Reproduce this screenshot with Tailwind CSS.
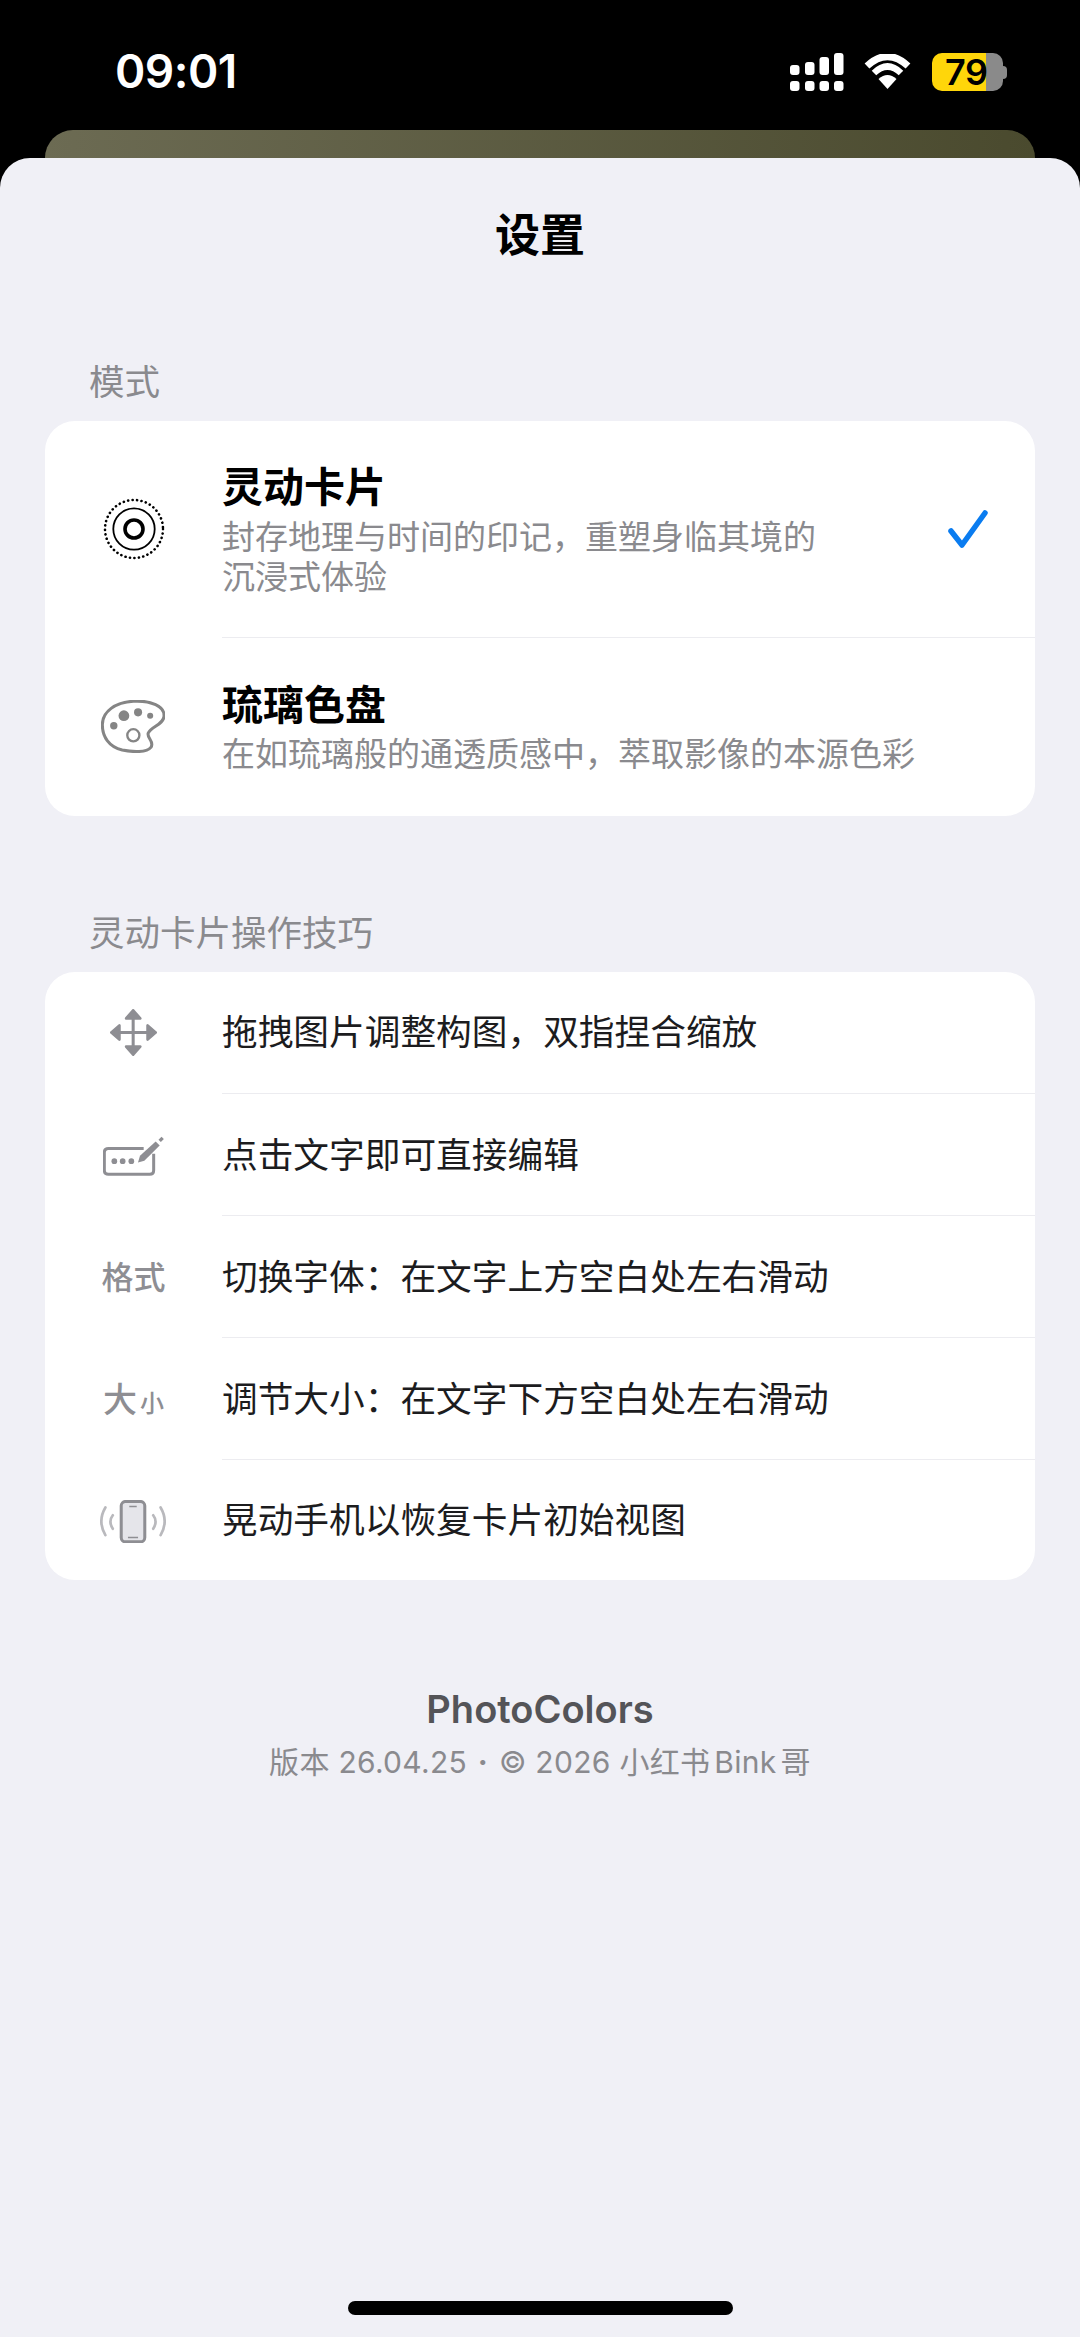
<!DOCTYPE html>
<html lang="zh-CN">
<head>
  <meta charset="UTF-8" />
  <meta name="viewport" content="width=device-width, initial-scale=1.0" />
  <title>设置</title>
  <script src="https://cdn.jsdelivr.net/npm/@tailwindcss/browser@4"></script>
</head>
<body class="bg-black">
<div class="w-[1080px] h-[2337px] bg-black overflow-hidden flex flex-col [font-family:Inter,'Noto_Sans_CJK_SC',sans-serif]">

  <!-- Status bar -->
  <div class="h-[130px] shrink-0 flex items-start justify-between pl-[115px] pr-[73px] text-white">
    <span class="mt-[41px] text-[46px] leading-[60px] font-semibold tracking-[-0.5px]">09:01</span>
    <div class="mt-[53px] flex items-start">
      <svg width="54" height="38" viewBox="790 53 54 38" fill="#fff">
        <rect x="790" y="65" width="9.5" height="10" rx="3"/><rect x="805" y="62" width="9.5" height="13" rx="3"/><rect x="819.5" y="57" width="9.5" height="18" rx="3"/><rect x="834" y="53" width="9.5" height="22" rx="3"/>
        <rect x="790" y="81" width="9.5" height="10" rx="3"/><rect x="805" y="81" width="9.5" height="10" rx="3"/><rect x="819.5" y="81" width="9.5" height="10" rx="3"/><rect x="834" y="81" width="9.5" height="10" rx="3"/>
      </svg>
      <svg class="ml-[20px] mt-[1px]" width="48" height="36" viewBox="864 54 48 36">
        <path d="M867 66 Q887.5 47 908 66" fill="none" stroke="#fff" stroke-width="7"/>
        <path d="M874 73 Q887.5 60 901 73" fill="none" stroke="#fff" stroke-width="6.5"/>
        <path d="M878.5 79 Q887.5 71 896.5 79 L887.5 89 Z" fill="#fff"/>
      </svg>
      <div class="ml-[20px] flex items-center">
        <div class="w-[71px] h-[38px] rounded-[10px] bg-[linear-gradient(90deg,#ffd60a_76%,#8a8a8a_76%)] text-black text-[36px] leading-[38px] font-semibold pl-[13px] tracking-[-0.5px]">79</div>
        <div class="w-[4px] h-[13px] rounded-r-full bg-[#8a8a8a]"></div>
      </div>
    </div>
  </div>

  <!-- Card peeking from behind the sheet -->
  <div class="h-[28px] shrink-0 mx-[45px] rounded-t-[30px] bg-[linear-gradient(90deg,#6c6b53,#4a4a2e)]"></div>

  <!-- Settings sheet -->
  <div class="flex-1 rounded-t-[30px] bg-[#f0f0f6] flex flex-col">
    <h1 class="mt-[50px] text-center text-[45px] leading-[56px] font-bold text-black">设置</h1>

    <p class="mt-[97px] pl-[89px] text-[35.5px] leading-[44px] text-[#8a8a8e]">模式</p>
    <div class="mt-[16px] mx-[45px] bg-white rounded-[30px]">
      <div class="h-[216px] flex items-center">
        <div class="w-[177px] shrink-0 flex justify-center">
          <svg width="62" height="62" viewBox="0 0 62 62" fill="none" stroke="#000">
            <circle cx="31" cy="31" r="29" stroke-width="2.6" stroke-dasharray="0.1 4.4" stroke-linecap="round"/>
            <circle cx="31" cy="31" r="20.7" stroke-width="1.8"/>
            <circle cx="31" cy="31" r="9" stroke-width="3.6"/>
          </svg>
        </div>
        <div class="flex-1 min-w-0">
          <h2 class="text-[41px] leading-[50px] font-bold text-black">灵动卡片</h2>
          <p class="mt-[5px] text-[33px] leading-[40px] text-[#8a8a8e]">封存地理与时间的印记，重塑身临其境的<br>沉浸式体验</p>
        </div>
        <svg class="mr-[47px] shrink-0" width="40" height="38" viewBox="948 510 40 38" fill="none" stroke="#0a7cf0" stroke-width="5.5" stroke-linecap="round" stroke-linejoin="round">
          <path d="M951 531 L962 545 L985 513"/>
        </svg>
      </div>
      <div class="h-[179px] flex items-center relative">
        <div class="absolute top-0 left-[177px] right-0 h-[1px] bg-[#ececf0]"></div>
        <div class="w-[177px] shrink-0 flex justify-center">
          <svg class="-ml-[2px]" width="64" height="53" viewBox="122 782 190 156" fill="none">
            <path d="M218 785 C270 782 312 800 309 830 C307 855 270 860 262 880 C258 895 282 905 270 922 C258 938 215 936 185 930 C145 920 126 890 126 855 C126 815 165 788 218 785 Z" stroke="#858585" stroke-width="9"/>
            <circle cx="190" cy="828" r="16" fill="#858585"/><circle cx="232" cy="818" r="12" fill="#858585"/><circle cx="268" cy="828" r="9" fill="#858585"/><circle cx="160" cy="858" r="11" fill="#858585"/>
            <circle cx="218" cy="886" r="18" stroke="#858585" stroke-width="7"/>
          </svg>
        </div>
        <div class="flex-1 min-w-0">
          <h2 class="text-[41px] leading-[50px] font-bold text-black">琉璃色盘</h2>
          <p class="mt-[4px] text-[33px] leading-[40px] text-[#8a8a8e]">在如琉璃般的通透质感中，萃取影像的本源色彩</p>
        </div>
      </div>
    </div>

    <p class="mt-[96px] pl-[89px] text-[35.5px] leading-[44px] text-[#8a8a8e]">灵动卡片操作技巧</p>
    <div class="mt-[16px] mx-[45px] bg-white rounded-[30px] text-[35.7px] text-[#1c1c1e]">
      <div class="h-[121px] flex items-center">
        <div class="w-[177px] shrink-0 flex justify-center">
          <svg width="47" height="47" viewBox="118 90 140 140" fill="#8e8e93" stroke="#8e8e93" stroke-linejoin="round">
            <path d="M187 160 V110 M187 160 V210 M187 160 H137 M187 160 H238" stroke-width="9"/>
            <path d="M187 94 L208 118 H166 Z M187 226 L208 202 H166 Z M122 160 L146 139 V181 Z M254 160 L230 139 V181 Z" stroke-width="8"/>
          </svg>
        </div>
        <span>拖拽图片调整构图，双指捏合缩放</span>
      </div>
      <div class="h-[122px] pt-[3px] flex items-center relative">
        <div class="absolute top-0 left-[177px] right-0 h-[1px] bg-[#ececf0]"></div>
        <div class="w-[177px] shrink-0 flex justify-center">
          <svg width="62" height="40" viewBox="96 472 186 119" fill="none" stroke="#8e8e93">
            <path d="M218 509 H112 Q100 509 100 521 V574 Q100 586 112 586 H236 Q248 586 248 574 V525" stroke-width="9"/>
            <circle cx="130" cy="547" r="8.5" fill="#8e8e93" stroke="none"/><circle cx="155" cy="547" r="8.5" fill="#8e8e93" stroke="none"/><circle cx="181" cy="547" r="8.5" fill="#8e8e93" stroke="none"/>
            <path d="M201 551 L207 531 L254 488 L266 500 L220 546 Z" fill="#8e8e93" stroke="none"/>
            <path d="M266 486 L275 477" stroke-width="10"/>
          </svg>
        </div>
        <span>点击文字即可直接编辑</span>
      </div>
      <div class="h-[122px] pt-[3px] flex items-center relative">
        <div class="absolute top-0 left-[177px] right-0 h-[1px] bg-[#ececf0]"></div>
        <div class="w-[177px] shrink-0 text-center text-[32px] font-medium text-[#8e8e93]">格式</div>
        <span>切换字体：在文字上方空白处左右滑动</span>
      </div>
      <div class="h-[122px] pt-[3px] flex items-center relative">
        <div class="absolute top-0 left-[177px] right-0 h-[1px] bg-[#ececf0]"></div>
        <div class="w-[177px] shrink-0 text-center font-medium text-[#8e8e93] text-[34px]">大<span class="text-[24px] ml-[3px]">小</span></div>
        <span>调节大小：在文字下方空白处左右滑动</span>
      </div>
      <div class="h-[121px] pt-[3px] flex items-center relative">
        <div class="absolute top-0 left-[177px] right-0 h-[1px] bg-[#ececf0]"></div>
        <div class="w-[177px] shrink-0 flex justify-center">
          <svg class="-ml-[2px]" width="66" height="43" viewBox="92 808 196 127" fill="none">
            <path d="M108 830 Q84 871 108 912 M130 853 Q116 871 130 893 M272 830 Q296 871 272 912 M250 853 Q264 871 250 893" stroke="#b9b9bd" stroke-width="8" stroke-linecap="round"/>
            <rect x="155" y="812" width="70" height="120" rx="13" fill="#e5e5ea" stroke="#8e8e93" stroke-width="9"/>
            <path d="M179 827 H201 M175 919 H205" stroke="#8e8e93" stroke-width="5"/>
          </svg>
        </div>
        <span>晃动手机以恢复卡片初始视图</span>
      </div>
    </div>

    <div class="mt-[107px] text-center">
      <p class="text-[38px] leading-[44px] font-semibold text-[#545458]">PhotoColors</p>
      <p class="mt-[9px] text-[30px] leading-[44px] text-[#8a8a8e] tracking-[0.3px]">版本 26.04.25 <span class="mx-[2px] font-bold">·</span> © 2026 小红书<span class="mx-[4px]">Bink</span>哥</p>
    </div>

    <div class="mt-auto mb-[22px] mx-auto w-[385px] h-[14px] rounded-full bg-black"></div>
  </div>
</div>
</body>
</html>
